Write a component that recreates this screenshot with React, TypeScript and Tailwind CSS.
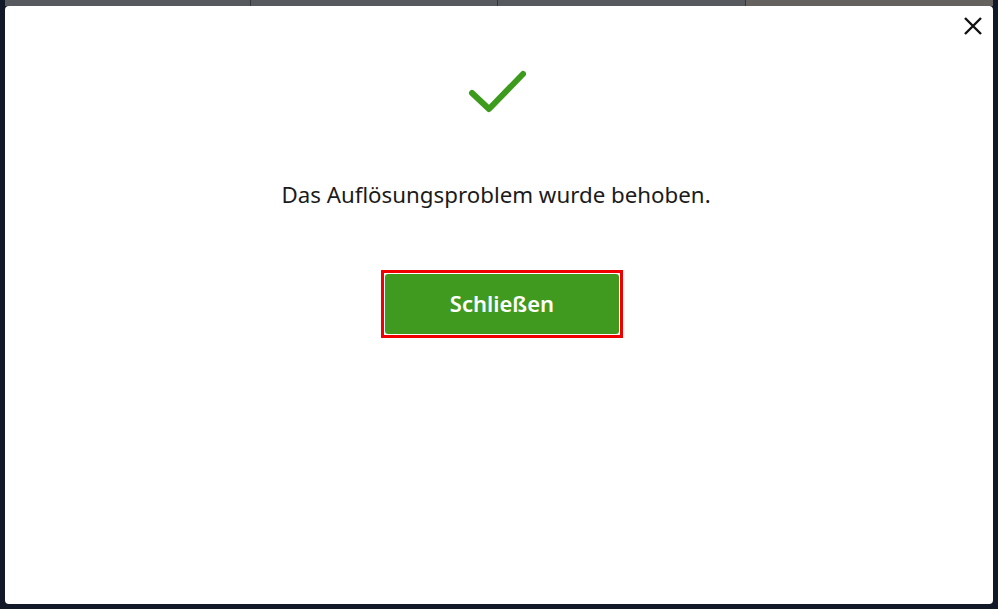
export default function App() {
  return (
    <div
      className="w-[998px] h-[609px] bg-[#111827] flex flex-col px-[5px] pb-[5px] overflow-hidden"
      style={{ fontFamily: '"Noto Sans", "Open Sans", sans-serif' }}
    >
      {/* Tabs behind the dialog */}
      <div className="flex h-[6px] shrink-0">
        <div className="w-[246px] bg-[#56595e] border-r border-[#33363b]" />
        <div className="w-[247px] bg-[#56595e] border-r border-[#33363b]" />
        <div className="w-[248px] bg-[#56595e] border-r border-[#33363b]" />
        <div className="flex-1 bg-[#64615f]" />
      </div>

      {/* Dialog */}
      <div className="relative flex-1 bg-white rounded-[4px] flex flex-col items-center">
        <button className="absolute right-[10px] top-[10px] w-[20px] h-[20px]" aria-label="Close">
          <svg width="20" height="20" viewBox="0 0 20 20" fill="none">
            <path d="M2 2 L18 18 M18 2 L2 18" stroke="#111" strokeWidth="2.4" />
          </svg>
        </button>

        <svg className="mt-[64px] -ml-[4px]" width="60" height="46" viewBox="0 0 60 46" fill="none">
          <path
            d="M5 23 L22 39 L56 4"
            stroke="#3c9b1b"
            strokeWidth="6"
            strokeLinecap="round"
            strokeLinejoin="round"
          />
        </svg>

        <p className="mt-[64px] text-[22.3px] leading-[30px] text-[#1b1b1b] -ml-[6px]">
          Das Auflösungsproblem wurde behoben.
        </p>

        <div className="mt-[60px] ml-[6px] border-[3px] border-[#f00000] p-px">
          <button className="w-[234px] h-[60px] bg-[#3f9a1f] rounded-[3px] text-white text-[22px] font-semibold leading-[28px] pb-[2px]">
            Schließen
          </button>
        </div>
      </div>
    </div>
  );
}
